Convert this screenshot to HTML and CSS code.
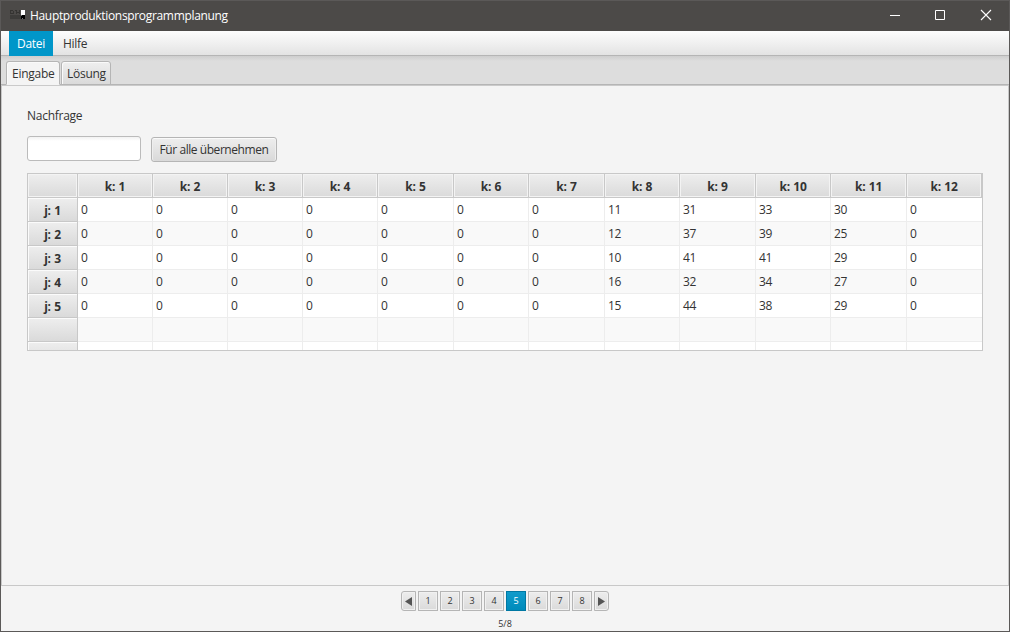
FILE: index.html
```
<!DOCTYPE html>
<html lang="de">
<head>
<meta charset="utf-8">
<title>Hauptproduktionsprogrammplanung</title>
<link rel="stylesheet" href="styles.css">
</head>
<body>
<div class="window">
  <header class="titlebar">
    <svg class="app-icon" width="16" height="16" viewBox="0 0 16 16" shape-rendering="crispEdges"><path d="M1 2.500h3M1 5.500h3M6 2.500h2M8 4.500h3" stroke="#343331" fill="none"/><path d="M1.500 3v3M4.500 3v3M7.500 3v3M10.500 2v4" stroke="#363533" fill="none"/><path fill="#3d3c3a" d="M1 7h11v4H1z"/><path fill="#fff" d="M12 2h4v5h-4z"/><path fill="#000" d="M12 7h4v4h-4z"/><path fill="#777" d="M12 7h1v1h-1zM13 10h1v1h-1z"/></svg>
    <span class="title">Hauptproduktionsprogrammplanung</span>
    <div class="controls">
      <svg width="45" height="30" viewBox="0 0 45 30"><path d="M16 14.500h10" stroke="#fff"/></svg>
      <svg width="46" height="30" viewBox="0 0 46 30"><path d="M16.500 9.500h9v9h-9z" stroke="#fff" fill="none"/></svg>
      <svg width="46" height="30" viewBox="0 0 46 30"><path d="M16 9l10 10M26 9l-10 10" stroke="#fff" stroke-width="1.100"/></svg>
    </div>
  </header>
  <nav class="menubar"><span class="menu active">Datei</span><span class="menu">Hilfe</span></nav>
  <div class="tabs"><span class="tab selected">Eingabe</span><span class="tab second">Lösung</span></div>
  <main class="content">
    <div class="label">Nachfrage</div>
    <div class="form"><input class="field" type="text"><button class="apply">Für alle übernehmen</button></div>
    <div class="table">
      <div class="row head"><b></b><b>k: 1</b><b>k: 2</b><b>k: 3</b><b>k: 4</b><b>k: 5</b><b>k: 6</b><b>k: 7</b><b>k: 8</b><b>k: 9</b><b>k: 10</b><b>k: 11</b><b>k: 12</b></div>
      <div class="row"><b>j: 1</b><span>0</span><span>0</span><span>0</span><span>0</span><span>0</span><span>0</span><span>0</span><span>11</span><span>31</span><span>33</span><span>30</span><span>0</span></div>
      <div class="row odd"><b>j: 2</b><span>0</span><span>0</span><span>0</span><span>0</span><span>0</span><span>0</span><span>0</span><span>12</span><span>37</span><span>39</span><span>25</span><span>0</span></div>
      <div class="row"><b>j: 3</b><span>0</span><span>0</span><span>0</span><span>0</span><span>0</span><span>0</span><span>0</span><span>10</span><span>41</span><span>41</span><span>29</span><span>0</span></div>
      <div class="row odd"><b>j: 4</b><span>0</span><span>0</span><span>0</span><span>0</span><span>0</span><span>0</span><span>0</span><span>16</span><span>32</span><span>34</span><span>27</span><span>0</span></div>
      <div class="row"><b>j: 5</b><span>0</span><span>0</span><span>0</span><span>0</span><span>0</span><span>0</span><span>0</span><span>15</span><span>44</span><span>38</span><span>29</span><span>0</span></div>
      <div class="row odd"><b></b><span></span><span></span><span></span><span></span><span></span><span></span><span></span><span></span><span></span><span></span><span></span><span></span></div>
      <div class="row"><b></b><span></span><span></span><span></span><span></span><span></span><span></span><span></span><span></span><span></span><span></span><span></span><span></span></div>
    </div>
  </main>
  <footer class="pager">
    <div class="pages">
      <span class="page arrow prev"><svg width="7" height="9" viewBox="0 0 7 9"><path d="M7 0v9L0 4.500z" fill="#555"/></svg></span><span class="page">1</span><span class="page">2</span><span class="page">3</span><span class="page">4</span><span class="page current">5</span><span class="page">6</span><span class="page">7</span><span class="page">8</span><span class="page arrow next"><svg width="7" height="9" viewBox="0 0 7 9"><path d="M0 0v9L7 4.500z" fill="#555"/></svg></span>
    </div>
    <div class="count">5/8</div>
  </footer>
</div>
</body>
</html>
```
FILE: styles.css
```
* { box-sizing: border-box; }
body { margin: 0; font: 12px/16px "Open Sans", "Noto Sans", sans-serif; color: #333; letter-spacing: -0.27px; }
.window { width: 1010px; height: 632px; border: 1px solid #5b5958; background: #f4f4f4; display: flex; flex-direction: column; overflow: hidden; }
.titlebar { height: 30px; background: #4c4a48; color: #fff; display: flex; align-items: center; flex: none; padding-left: 8px; }
.app-icon { margin-right: 5px; }
.title { letter-spacing: -0.33px; }
.controls { margin-left: auto; display: flex; margin-right: -2px; }
.menubar { height: 25px; flex: none; display: flex; padding-left: 8px; background: linear-gradient(#fdfdfd, #e3e3e3); border-bottom: 1px solid #b5b5b5; }
.menu { height: 25px; padding: 5px 8px 0; margin-right: 2px; }
.menu.active { background: #0096c9; color: #fff; width: 44px; }
.tabs { height: 30px; flex: none; display: flex; align-items: flex-end; padding-left: 5px; border-bottom: 1px solid #cacaca; background: linear-gradient(#b5b5b5, #b5b5b5) 0 28px / 100% 1px no-repeat, linear-gradient(#cecece, #ddd 5px); }
.tab { height: 24px; border: 1px solid #b5b5b5; border-radius: 3px 3px 0 0; padding: 4px 0 0 5px; box-shadow: inset 1px 1px #fafafa; background: linear-gradient(#efefef, #dadada); width: 50px; }
.tab.selected { width: 54px; background: #f4f4f4; margin-right: 1px; border-bottom-color: #f4f4f4; }
.content { flex: 1; border: 1px solid #c8c8c8; border-top: 0; padding: 22px 25px 0; }
.label { height: 28px; }
.form { display: flex; height: 37px; gap: 10px; }
.field { width: 114px; height: 25px; border: 1px solid #bbb; border-radius: 3px; background: linear-gradient(#f2f2f2, #fff 4px); outline: 0; padding: 0 6px; }
.apply { width: 126px; height: 25px; margin-top: 1px; border: 1px solid #b5b5b5; border-radius: 3px; box-shadow: inset 0 1px #fafafa, inset 1px 0 #eee, inset -1px 0 #eee; background: linear-gradient(#eee, #d9d9d9); font: inherit; color: inherit; letter-spacing: -0.44px; padding: 0; white-space: nowrap; }
.table { width: 956px; height: 178px; border: 1px solid #c8c8c8; overflow: hidden; background: #fff; }
.row { display: grid; grid-template-columns: 50px 75px 75px 75px 75px 76px 75px 76px 75px 76px 75px 76px 75px; height: 24px; letter-spacing: -0.3px; }
.row b { border-right: 1px solid #c8c8c8; border-bottom: 1px solid #c8c8c8; box-shadow: inset 1px 1px #fbfbfb; background: linear-gradient(#eee, #dadada); text-align: center; padding-top: 5px; word-spacing: 0.7px; }
.row.head b { box-shadow: inset 0 0 0 1px #f3f3f3; }
.row span { border-right: 1px solid #ededed; border-bottom: 1px solid #ededed; padding: 4px 0 0 3px; }
.row span:last-child { border-right: 0; }
.odd { background: #f9f9f9; }
.pager { height: 45px; flex: none; padding-top: 5px; font-size: 9px; text-align: center; }
.pages { display: flex; justify-content: center; gap: 2px; height: 20px; }
.page { width: 20px; height: 20px; border: 1px solid #b5b5b5; box-shadow: inset 0 0 0 1px #f1f1f1; background: linear-gradient(#ededed, #dadada); line-height: 18px; letter-spacing: 0; }
.page.current { background: linear-gradient(#109bcb, #008bbb); border-color: #0078a3; box-shadow: none; color: #fff; }
.page.arrow { width: 15px; display: flex; align-items: center; justify-content: center; }
.prev { border-radius: 3px 0 0 3px; }
.next { border-radius: 0 3px 3px 0; }
.count { line-height: 14px; margin-top: 6px; letter-spacing: 0; }
```
